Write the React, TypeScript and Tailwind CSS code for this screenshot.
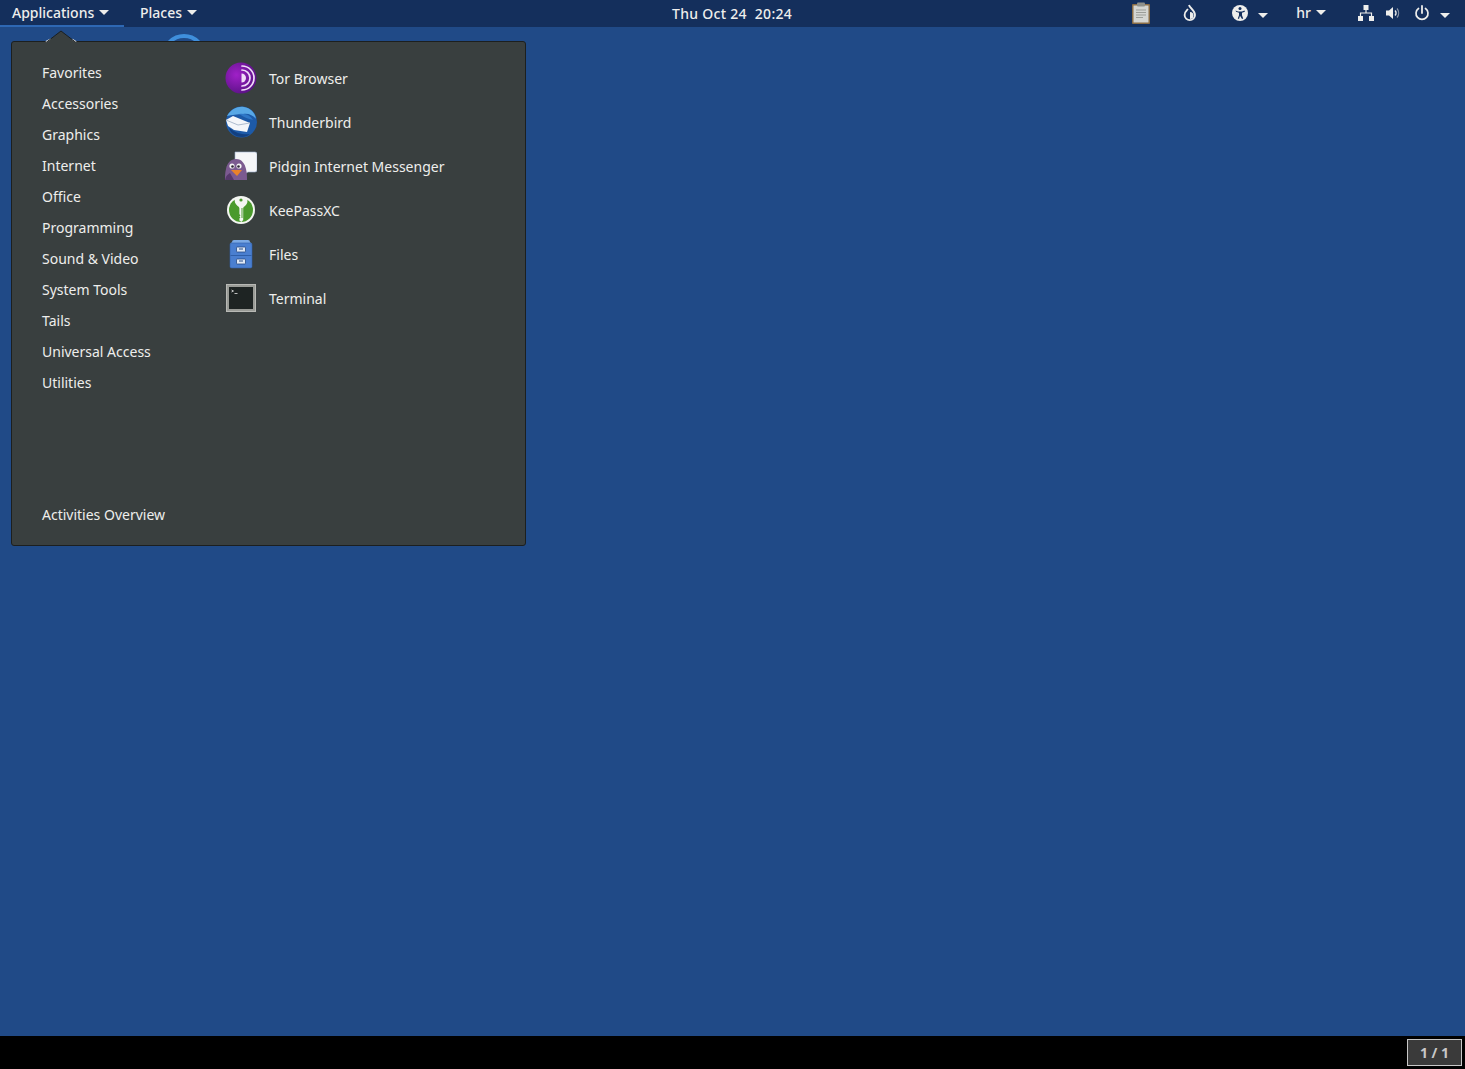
const font = { fontFamily: '"Noto Sans", sans-serif' };

const categories = [
  "Favorites",
  "Accessories",
  "Graphics",
  "Internet",
  "Office",
  "Programming",
  "Sound & Video",
  "System Tools",
  "Tails",
  "Universal Access",
  "Utilities",
];

const Caret = () => <span className="ml-[5px] inline-block h-0 w-0 border-x-[5px] border-t-[5px] border-x-transparent border-t-[#eeeeec]" />;

const TorIcon = () => (
  <svg width="32" height="32" viewBox="0 0 32 32">
    <defs>
      <radialGradient id="tor" cx="0.35" cy="0.4" r="0.8">
        <stop offset="0" stopColor="#a020c8" />
        <stop offset="1" stopColor="#4c0f78" />
      </radialGradient>
    </defs>
    <circle cx="16" cy="16" r="15.5" fill="url(#tor)" />
    <g fill="none" stroke="#f0dcf8" strokeLinecap="round">
      <path d="M17 4a12 12 0 0 1 0 24" strokeWidth="1.7" />
      <path d="M17 8a8 8 0 0 1 0 16" strokeWidth="1.7" />
    </g>
    <path d="M16.500 11.500a4.500 4.500 0 0 1 0 9z" fill="#f0dcf8" />
  </svg>
);

const ThunderbirdIcon = () => (
  <svg width="32" height="32" viewBox="0 0 32 32">
    <circle cx="16.500" cy="16" r="15.500" fill="#1d5aa8" />
    <path d="M2 10C6 3 13 0 19 1c6 1 11 5 12 12-3-4-8-6-13-5-6 0-11 1-16 2z" fill="#58a8e6" />
    <path d="M14 8c6-1 11 1 14 6-3-1-8-2-14-6z" fill="#2f78c8" />
    <path d="M1 14l7-4 17 7-3 9-13-2-6-4z" fill="#f4f6fa" />
    <path d="M1 14l12 5 12-2" fill="none" stroke="#aebccf" strokeWidth="1" />
    <path d="M4 22c2 6 7 9 13 9 3 0 6-1 8-3-6 1-13 0-21-6z" fill="#123f80" />
  </svg>
);

const PidginIcon = () => (
  <svg width="32" height="32" viewBox="0 0 32 32">
    <path d="M10 2h20a2 2 0 0 1 2 2v16a2 2 0 0 1-2 2h-7l-5 3v-3h-8z" fill="#f5f6f8" stroke="#9fb4d0" strokeWidth="0.6" />
    <path d="M0 30c0-4 0-7 1-11 1-6 5-10 10-10 6 0 9 5 10 10 1 4 1 8 1 11z" fill="#7b5a90" />
    <path d="M0 30c1-4 2-5 5-7l4 7z" fill="#55386b" />
    <circle cx="7" cy="16" r="2.600" fill="#f4f4f4" />
    <circle cx="14" cy="16" r="2.600" fill="#f4f4f4" />
    <circle cx="7.500" cy="16.500" r="1.300" fill="#2e2436" />
    <circle cx="13.500" cy="16.500" r="1.300" fill="#2e2436" />
    <path d="M6 20h11l-5 6z" fill="#e9822a" />
  </svg>
);

const KeePassIcon = () => (
  <svg width="32" height="32" viewBox="0 0 32 32">
    <circle cx="16" cy="16" r="14" fill="#f4f6f2" />
    <circle cx="16" cy="16" r="12" fill="#4a9a2c" />
    <path d="M10 4h12c1 3 .5 6-2 8-1 .8-1.800 1.200-1.800 2.500V26l-1.800 2-2-1.500v-2l1-1-1-1 1-1-1-1.500v-5.500c0-1.300-.8-1.700-1.800-2.500-2.500-2-3.600-5-2.600-8z" fill="#f4f6f2" />
    <circle cx="16" cy="6" r="1.600" fill="#4a9a2c" />
    <path d="M16.500 14h1v10h-1z" fill="#4a9a2c" />
  </svg>
);

const FilesIcon = () => (
  <svg width="32" height="32" viewBox="0 0 32 32">
    <path d="M7 4q0-2 2-2h14q2 0 2 2l2 2H5z" fill="#7ba9e4" />
    <rect x="5" y="5" width="22" height="25" rx="1.500" fill="#4a7fd0" stroke="#2f5fa8" strokeWidth="0.6" />
    <path d="M5.500 17.500h21" stroke="#2f5fa8" strokeWidth="1" />
    <rect x="11.500" y="9" width="9" height="5" rx="0.500" fill="#dfe8f5" stroke="#244a85" strokeWidth="0.8" />
    <rect x="11.500" y="21" width="9" height="5" rx="0.500" fill="#dfe8f5" stroke="#244a85" strokeWidth="0.8" />
    <path d="M14 11h4M14 23h4" stroke="#244a85" strokeWidth="1" />
  </svg>
);

const TerminalIcon = () => (
  <svg width="32" height="32" viewBox="0 0 32 32">
    <rect x="1.500" y="2.500" width="29" height="27" fill="#9a9c97" stroke="#b8b9b5" strokeWidth="1" />
    <rect x="4" y="5" width="24" height="22" fill="#1e2423" />
    <path d="M6.500 8l2 1-2 1" fill="none" stroke="#e8e8e8" strokeWidth="0.8" />
    <path d="M9.500 11.500h3" stroke="#e8e8e8" strokeWidth="0.8" />
  </svg>
);

const apps = [
  { name: "Tor Browser", icon: <TorIcon /> },
  { name: "Thunderbird", icon: <ThunderbirdIcon /> },
  { name: "Pidgin Internet Messenger", icon: <PidginIcon /> },
  { name: "KeePassXC", icon: <KeePassIcon /> },
  { name: "Files", icon: <FilesIcon /> },
  { name: "Terminal", icon: <TerminalIcon /> },
];

const TopBar = () => (
  <div className="relative flex h-[27px] shrink-0 items-center bg-[#142f5c] text-[14px] font-medium text-[#eeeeec]">
    <div className="flex h-full w-[124px] items-center border-b-2 border-[#2e68b4] pl-3">
      Applications
      <Caret />
    </div>
    <div className="flex h-full items-center pb-0.5 pl-4">
      Places
      <Caret />
    </div>
    <div className="absolute left-[672px] top-[3px] tracking-[0.3px]">Thu Oct 24&nbsp; 20:24</div>
    <div className="ml-auto flex h-full items-center pb-0.5 pr-[15px]">
      <svg width="20" height="22" viewBox="0 0 20 22" className="mr-[31px]">
        <rect x="1" y="2" width="18" height="20" rx="1" fill="#8a6d45" />
        <rect x="2.500" y="3.500" width="15" height="17" fill="#d5d6d2" />
        <rect x="6" y="0.500" width="8" height="4" rx="1" fill="#8f918c" />
        <path d="M5 8h10M5 10.500h10M5 13h10M5 15.500h7" stroke="#9b9d98" strokeWidth="1" />
      </svg>
      <svg width="16" height="18" viewBox="0 0 16 18" className="mr-[34px]">
        <path d="M7 1c.5 3 6 5 6 10a5.200 5.200 0 0 1-10.400 0c0-3 2-4.500 3.400-6" fill="none" stroke="#eeeeec" strokeWidth="1.800" />
        <path d="M8 8a3.500 3.500 0 0 1 0 7z" fill="#eeeeec" />
      </svg>
      <svg width="16" height="16" viewBox="0 0 16 16">
        <circle cx="8" cy="8" r="8" fill="#eeeeec" />
        <circle cx="8" cy="3.600" r="1.500" fill="#142f5c" />
        <path d="M3.500 5.600L6 6.500h4l2.500-.9.400 1.200-2.900 1v2.400l1.200 3.300-1.200.4L8 10.700l-1 3.200-1.200-.4L7 10.200V7.800l-2.900-1z" fill="#142f5c" />
      </svg>
      <span className="ml-[5px]">
        <Caret />
      </span>
      <span className="ml-[28px]">hr</span>
      <Caret />
      <svg width="16" height="16" viewBox="0 0 16 16" className="ml-[32px]">
        <path d="M5.500 0h5v5h-5zM0 11h5v5H0zM11 11h5v5h-5z" fill="#eeeeec" />
        <path d="M8 5v3M2.500 11V8h11v3" fill="none" stroke="#eeeeec" strokeWidth="1.200" />
      </svg>
      <svg width="16" height="16" viewBox="0 0 16 16" className="ml-[11px]">
        <path d="M1 5.500h3L8 2v12l-4-3.500H1z" fill="#eeeeec" />
        <path d="M10 5.500a3.500 3.500 0 0 1 0 5" fill="none" stroke="#eeeeec" strokeWidth="1.400" />
        <path d="M12 3.500a7 7 0 0 1 0 9" fill="none" stroke="#8d97a8" strokeWidth="1.200" />
      </svg>
      <svg width="16" height="16" viewBox="0 0 16 16" className="ml-[13px]">
        <path d="M8 1v7" stroke="#eeeeec" strokeWidth="1.800" strokeLinecap="round" />
        <path d="M4.500 3.500a6 6 0 1 0 7 0" fill="none" stroke="#eeeeec" strokeWidth="1.700" strokeLinecap="round" />
      </svg>
      <span className="ml-[5px]">
        <Caret />
      </span>
    </div>
  </div>
);

const AppMenu = () => (
  <div className="absolute left-[11px] top-[14px] flex h-[505px] w-[515px] rounded-[3px] border border-[#1c1f1f] bg-[#393f3f] text-[14px] text-[#eeeeec]">
    {/* arrow pointing at the Applications button, desktop icon roof sticks out under it */}
    <svg width="36" height="13" viewBox="0 0 36 13" className="absolute -top-[12px] left-[31px]">
      <path d="M3 12l5-2.500M33 12l-4-2.500" stroke="#e4e4e4" strokeWidth="2" />
      <path d="M3 13L18 1l15 12z" fill="#393f3f" />
      <path d="M3 12.500L18 1l15 11.500" fill="none" stroke="#1c1f1f" strokeWidth="1" />
    </svg>
    <div className="relative flex w-[213px] shrink-0 flex-col pl-[30px] pt-[15px]">
      {categories.map((c) => (
        <div key={c} className="flex h-[31px] items-center">{c}</div>
      ))}
      <div className="absolute left-[30px] top-[457px] flex h-[31px] items-center">Activities Overview</div>
    </div>
    <div className="flex flex-col pt-[14px]">
      {apps.map((a) => (
        <div key={a.name} className="flex h-[44px] items-center">
          <span className="flex w-[32px] justify-center">{a.icon}</span>
          <span className="ml-[12px]">{a.name}</span>
        </div>
      ))}
    </div>
  </div>
);

export default function App() {
  return (
    <div className="flex h-[1069px] flex-col overflow-hidden bg-[#204a87]" style={font}>
      <TopBar />
      <div className="relative flex-1">
        <div className="absolute left-[162px] top-[7px] h-11 w-11 rounded-full border-4 border-[#3f8fdc]" />
        <AppMenu />
      </div>
      <div className="flex h-[33px] shrink-0 items-center justify-end bg-black pr-[3px]">
        <div className="flex h-[27px] w-[55px] items-center justify-center border border-[#c8c8c8] bg-[#3a3a3a] text-[14px] font-bold text-[#c8c8c8]">
          1 / 1
        </div>
      </div>
    </div>
  );
}
